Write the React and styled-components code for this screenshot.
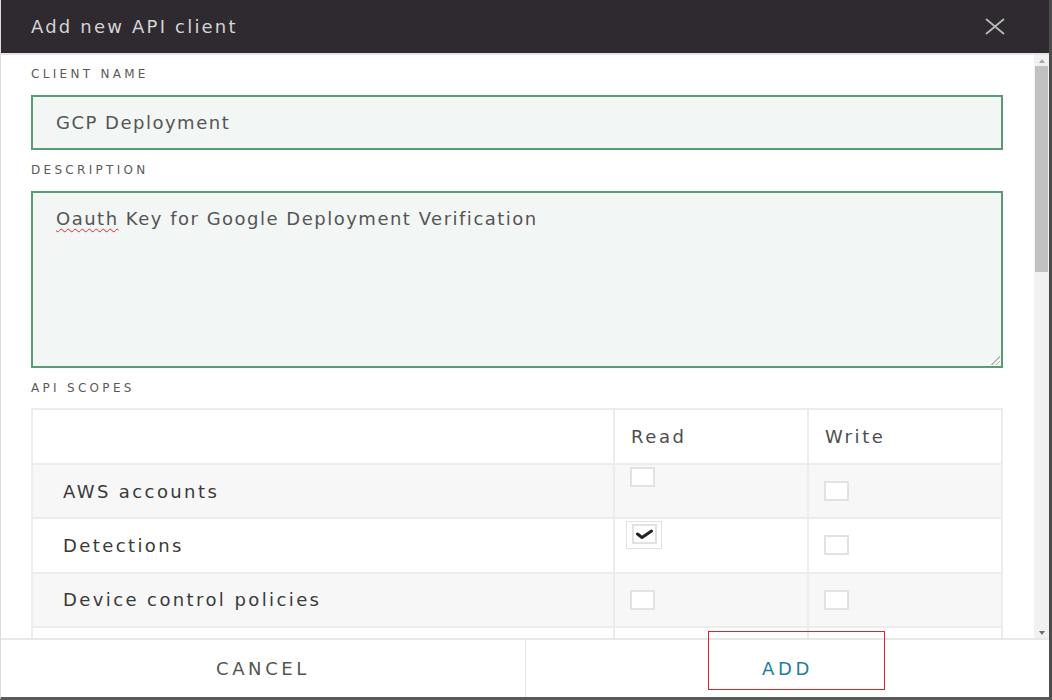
import styled, { createGlobalStyle } from "styled-components";

const GlobalStyle = createGlobalStyle`
  html, body {
    margin: 0;
    padding: 0;
    background: #ffffff;
  }
  body {
    font-family: "DejaVu Sans", "Liberation Sans", sans-serif;
  }
  * {
    box-sizing: border-box;
  }
`;

const Modal = styled.div`
  width: 100vw;
  height: 100vh;
  display: flex;
  flex-direction: column;
  background: #ffffff;
  border-left: 1px solid #dcdcdc;
  border-right: 3px solid #4c4c4c;
  border-bottom: 3px solid #5a5a5a;
`;

const Header = styled.div`
  height: 55px;
  flex-shrink: 0;
  display: flex;
  align-items: center;
  justify-content: space-between;
  padding: 0 44px 0 30px;
  background: #2f2a30;
  border-bottom: 2px solid #e4e4e4;
`;

const Title = styled.h1`
  margin: 0;
  font-size: 18px;
  font-weight: normal;
  letter-spacing: 2.2px;
  color: #d4d4d4;
`;

const Close = styled.button`
  border: 0;
  padding: 0;
  background: none;
  display: flex;
  cursor: pointer;
`;

const Main = styled.div`
  flex: 1;
  min-height: 0;
  display: flex;
`;

const Content = styled.div`
  flex: 1;
  overflow: hidden;
  padding: 0 31px 0 30px;
`;

const ScrollBar = styled.div`
  width: 15px;
  flex-shrink: 0;
  display: flex;
  flex-direction: column;
  background: #f1f1f1;
`;

const ScrollArrow = styled.div`
  height: 11px;
  display: flex;
  align-items: center;
  justify-content: center;

  &::before {
    content: "";
    border-left: 3.5px solid transparent;
    border-right: 3.5px solid transparent;
    ${(p) =>
      p.$down
        ? "border-top: 4px solid #6e6e6e;"
        : "border-bottom: 4px solid #a8a8a8;"}
  }
`;

const Track = styled.div`
  flex: 1;
`;

const Thumb = styled.div`
  height: 206px;
  margin: 0 1px;
  background: #c1c1c1;
`;

const Label = styled.div`
  margin: 13px 0 13px;
  font-size: 12px;
  line-height: 15px;
  letter-spacing: 3.3px;
  color: #5a5a5a;

  &:first-child {
    margin-top: 12px;
  }
`;

const Field = styled.div`
  position: relative;
  height: ${(p) => p.$height}px;
  padding: ${(p) => (p.$multiline ? "15px 23px" : "0 23px")};
  display: flex;
  align-items: ${(p) => (p.$multiline ? "flex-start" : "center")};
  background: #f2f6f4;
  border: 2px solid #5b9b74;
  font-size: 18px;
  line-height: 21px;
  letter-spacing: 1.5px;
  color: #555555;

  ${(p) =>
    p.$multiline &&
    `
    &::after {
      content: "";
      position: absolute;
      right: 1px;
      bottom: 1px;
      width: 9px;
      height: 9px;
      background: linear-gradient(
        135deg,
        transparent 48%,
        #b4b4b4 48%,
        #b4b4b4 56%,
        transparent 56%,
        transparent 74%,
        #b4b4b4 74%,
        #b4b4b4 82%,
        transparent 82%
      );
    }
  `}
`;

const Misspelled = styled.span`
  text-decoration: underline wavy #e0282e;
  text-decoration-thickness: 1px;
  text-underline-offset: 3px;
`;

const Table = styled.div`
  margin-top: -1px;
  border-top: 2px solid #ececec;
  border-left: 2px solid #ececec;
`;

const Row = styled.div`
  display: grid;
  grid-template-columns: 3fr 1fr 1fr;
  height: ${(p) => (p.$head ? 55 : 54.3)}px;
  background: ${(p) => (p.$shaded ? "#f7f7f7" : "#ffffff")};
`;

const Cell = styled.div`
  display: flex;
  align-items: ${(p) => (p.$top ? "flex-start" : "center")};
  padding: ${(p) => (p.$top ? "2px 0 0 15px" : "0 0 0 15px")};
  border-right: 2px solid #ececec;
  border-bottom: 2px solid #ececec;
  font-size: 18px;
  letter-spacing: 2.4px;
  color: #3a3a3a;
`;

const NameCell = styled(Cell)`
  padding-left: 30px;
`;

const HeadCell = styled(Cell)`
  padding-left: 16px;
  color: #4e4e4e;
  letter-spacing: 2.6px;
`;

const Box = styled.span`
  width: 25px;
  height: 20px;
  display: flex;
  align-items: center;
  justify-content: center;
  background: #ffffff;
  border: 2px solid #e2e2e2;
`;

const CheckFrame = styled.span`
  margin-left: -4px;
  padding: 2px 4px 4px 5px;
  border: 1px solid #e2e2e2;
  display: flex;
`;

const Footer = styled.div`
  position: relative;
  height: 59px;
  flex-shrink: 0;
  display: grid;
  grid-template-columns: 1fr 1fr;
  border-top: 2px solid #e8e8e8;
`;

const FooterButton = styled.button`
  border: 0;
  background: #ffffff;
  font-family: "DejaVu Sans", "Liberation Sans", sans-serif;
  font-size: 18px;
  letter-spacing: 3.6px;
  color: ${(p) => (p.$primary ? "#1a7fa1" : "#555555")};
  cursor: pointer;

  & + & {
    border-left: 1px solid #e4e4e4;
  }
`;

const Highlight = styled.div`
  position: absolute;
  left: 707px;
  top: -9px;
  width: 177px;
  height: 59px;
  border: 1.5px solid #e3232a;
  pointer-events: none;
`;

const scopes = [
  { name: "AWS accounts", readTop: true },
  { name: "Detections", read: true, readTop: true },
  { name: "Device control policies" },
];

function CloseIcon() {
  return (
    <svg width="20" height="17" viewBox="0 0 20 17">
      <path d="M1 1 L19 16 M19 1 L1 16" stroke="#b8b8b8" strokeWidth="1.8" fill="none" />
    </svg>
  );
}

function Checkbox({ checked }) {
  if (!checked) return <Box />;
  return (
    <CheckFrame>
      <Box>
        <svg width="17" height="11" viewBox="0 0 17 11">
          <path d="M1.5 5 L6 8.5 L15.5 2" stroke="#222" strokeWidth="3" fill="none" strokeLinecap="round" strokeLinejoin="round" />
        </svg>
      </Box>
    </CheckFrame>
  );
}

export default function App() {
  return (
    <>
      <GlobalStyle />
      <Modal>
        <Header>
          <Title>Add new API client</Title>
          <Close aria-label="Close">
            <CloseIcon />
          </Close>
        </Header>
        <Main>
          <Content>
            <Label>CLIENT NAME</Label>
            <Field $height={55}>GCP Deployment</Field>
            <Label>DESCRIPTION</Label>
            <Field $height={177} $multiline>
              <span>
                <Misspelled>Oauth</Misspelled> Key for Google Deployment Verification
              </span>
            </Field>
            <Label>API SCOPES</Label>
            <Table>
              <Row $head>
                <HeadCell />
                <HeadCell>Read</HeadCell>
                <HeadCell>Write</HeadCell>
              </Row>
              {scopes.map((s, i) => (
                <Row key={s.name} $shaded={i % 2 === 0}>
                  <NameCell>{s.name}</NameCell>
                  <Cell $top={s.readTop}>
                    <Checkbox checked={s.read} />
                  </Cell>
                  <Cell>
                    <Checkbox checked={s.write} />
                  </Cell>
                </Row>
              ))}
              <Row>
                <NameCell />
                <Cell />
                <Cell />
              </Row>
            </Table>
          </Content>
          <ScrollBar>
            <ScrollArrow />
            <Track>
              <Thumb />
            </Track>
            <ScrollArrow $down />
          </ScrollBar>
        </Main>
        <Footer>
          <FooterButton>CANCEL</FooterButton>
          <FooterButton $primary>ADD</FooterButton>
          <Highlight />
        </Footer>
      </Modal>
    </>
  );
}
